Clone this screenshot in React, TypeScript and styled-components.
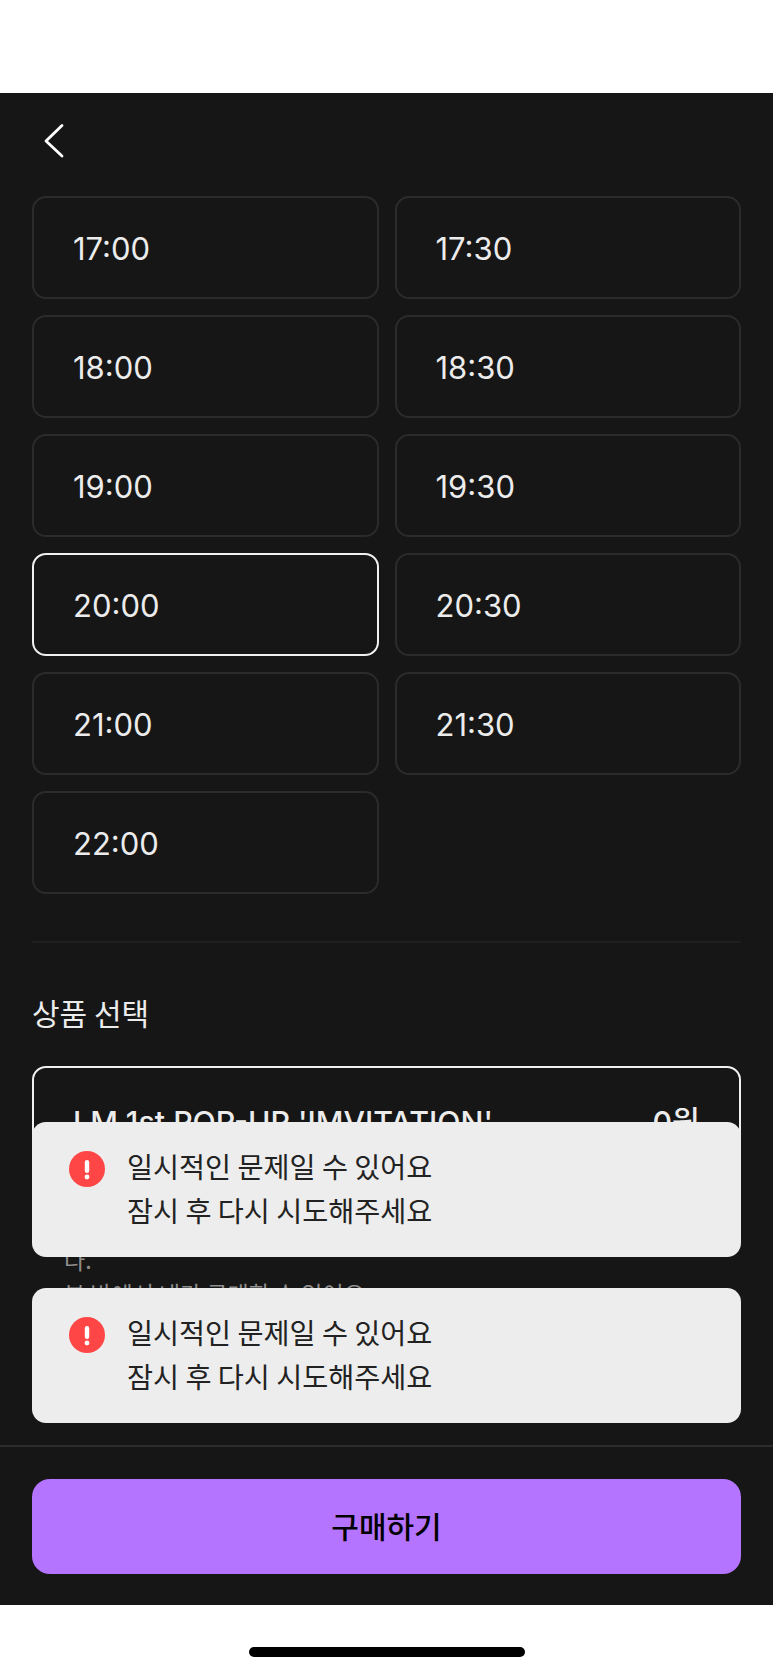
import React from "react";
import styled, { createGlobalStyle } from "styled-components";

const Global = createGlobalStyle`
  html, body { margin: 0; padding: 0; background: #fff; }
  body { font-family: Inter, "Noto Sans CJK KR", sans-serif; }
  * { box-sizing: border-box; }
`;

const Page = styled.div`
  width: 773px;
  height: 1673px;
  display: flex;
  flex-direction: column;
  overflow: hidden;
`;
const StatusSpace = styled.div`
  height: 93px;
  flex: none;
  background: #fff;
`;
const Sheet = styled.main`
  position: relative;
  height: 1512px;
  flex: none;
  background: #161616;
  display: flex;
  flex-direction: column;
  overflow: hidden;
`;
const Header = styled.header`
  height: 103px;
  flex: none;
  padding: 30px 0 0 42px;
`;
const BackButton = styled.button`
  display: block;
  padding: 0;
  border: 0;
  background: none;
  width: 24px;
  height: 36px;
`;
const Content = styled.div`
  flex: 1;
  min-height: 0;
  overflow: hidden;
  padding: 0 32px;
`;
const SlotGrid = styled.div`
  display: grid;
  grid-template-columns: 1fr 1fr;
  column-gap: 16px;
  row-gap: 16px;
`;
const Slot = styled.div<{ $selected?: boolean }>`
  height: 103px;
  border: 2px solid ${(p) => (p.$selected ? "#f0f0f0" : "#2b2b2b")};
  border-radius: 14px;
  padding: 2px 0 0 39px;
  display: flex;
  align-items: center;
  color: #ececec;
  font-size: 31px;
  font-weight: 400;
`;
const Divider = styled.hr`
  margin: 47px 0 0;
  border: 0;
  height: 2px;
  background: #1f1f1f;
`;
const SectionTitle = styled.h2`
  margin: 46px 0 0;
  height: 46px;
  font-size: 30px;
  line-height: 46px;
  font-weight: 400;
  color: #ececec;
  font-family: "Noto Sans CJK KR", sans-serif;
`;
const ProductCard = styled.div`
  margin-top: 31px;
  border: 2px solid #f0f0f0;
  border-radius: 14px;
  padding: 32px 39px 0;
  height: 160px;
`;
const ProductRow = styled.div`
  display: flex;
  justify-content: space-between;
  color: #ececec;
  font-size: 30.3px;
  line-height: 44px;
  font-weight: 500;
  white-space: nowrap;
`;
const Notes = styled.div`
  margin: 16px 0 0 32px;
`;
const ProductNote = styled.p`
  margin: 0;
  color: #8f8f8f;
  font-size: 23px;
  line-height: 34px;
  font-family: "Noto Sans CJK KR", sans-serif;
  white-space: nowrap;
`;
const Footer = styled.footer`
  flex: none;
  height: 160px;
  border-top: 2px solid #2c2c2c;
  padding: 32px 32px 0;
`;
const BuyButton = styled.button`
  display: block;
  width: 709px;
  height: 95px;
  border: 0;
  border-radius: 18px;
  background: #b474ff;
  color: #000;
  font-family: "Noto Sans CJK KR", sans-serif;
  font-size: 30px;
  font-weight: 500;
  padding: 0 0 4px;
`;
const ToastStack = styled.div`
  position: absolute;
  left: 32px;
  top: 1029px;
  width: 709px;
  display: flex;
  flex-direction: column;
  gap: 31px;
`;
const Toast = styled.div`
  height: 135px;
  border-radius: 14px;
  background: #ededed;
  padding: 29px 37px 0;
  display: flex;
  gap: 22px;
`;
const ToastIcon = styled.svg`
  flex: none;
  width: 36px;
  height: 36px;
`;
const ToastText = styled.div`
  color: #222;
  font-family: "Noto Sans CJK KR", sans-serif;
  font-size: 28.3px;
  line-height: 44px;
  font-weight: 400;
  margin-top: -7px;
`;
const HomeArea = styled.div`
  flex: 1;
  background: #fff;
  padding-top: 42px;
  display: flex;
  justify-content: center;
`;
const HomeBar = styled.div`
  width: 276px;
  height: 10px;
  border-radius: 5px;
  background: #000;
`;

const times = ["17:00", "17:30", "18:00", "18:30", "19:00", "19:30", "20:00", "20:30", "21:00", "21:30", "22:00"];

const ErrorToast = () => (
  <Toast>
    <ToastIcon viewBox="0 0 36 36">
      <circle cx="18" cy="18" r="18" fill="#ff4646" />
      <rect x="15.8" y="9" width="4.4" height="13" rx="2.2" fill="#fff" />
      <circle cx="18" cy="26" r="2.4" fill="#fff" />
    </ToastIcon>
    <ToastText>
      일시적인 문제일 수 있어요
      <br />
      잠시 후 다시 시도해주세요
    </ToastText>
  </Toast>
);

export default function App() {
  return (
    <Page>
      <Global />
      <StatusSpace />
      <Sheet>
        <Header>
          <BackButton aria-label="뒤로">
            <svg width="24" height="36" viewBox="0 0 24 36" fill="none">
              <path d="M20 2.5 L4 18 L20 33" stroke="#fff" strokeWidth="2.8" strokeLinecap="round" strokeLinejoin="round" />
            </svg>
          </BackButton>
        </Header>
        <Content>
          <SlotGrid>
            {times.map((t) => (
              <Slot key={t} $selected={t === "20:00"}>
                {t}
              </Slot>
            ))}
          </SlotGrid>
          <Divider />
          <SectionTitle>상품 선택</SectionTitle>
          <ProductCard>
            <ProductRow>
              <span>LM 1st POP-UP 'IMVITATION'</span>
              <span>0원</span>
            </ProductRow>
          </ProductCard>
          <Notes>
            <ProductNote>다.</ProductNote>
            <ProductNote>본 방에서 내가 구매할 수 있어요</ProductNote>
          </Notes>
        </Content>
        <Footer>
          <BuyButton>구매하기</BuyButton>
        </Footer>
        <ToastStack>
          <ErrorToast />
          <ErrorToast />
        </ToastStack>
      </Sheet>
      <HomeArea>
        <HomeBar />
      </HomeArea>
    </Page>
  );
}
